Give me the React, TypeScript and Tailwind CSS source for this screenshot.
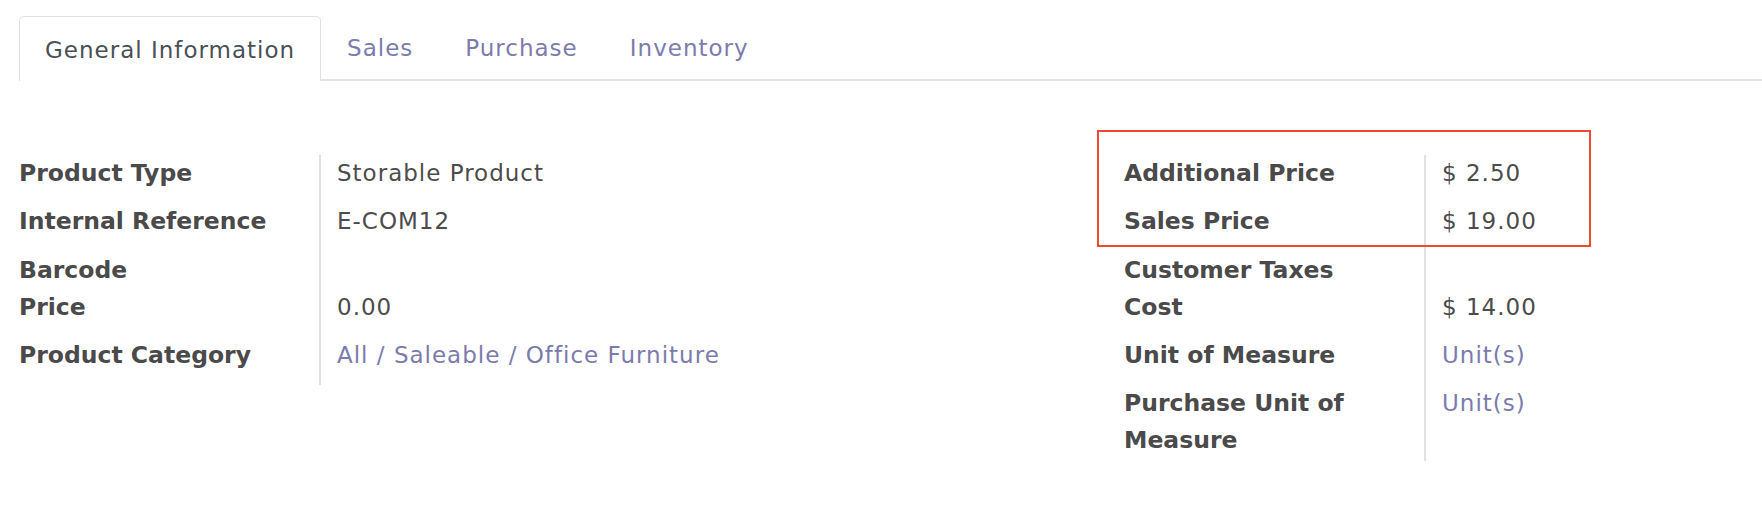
import React from "react";

type Row = { label: string[]; value?: string; link?: boolean; h: string };

const LEFT_ROWS: Row[] = [
  { label: ["Product Type"], value: "Storable Product", h: "h-[48px]" },
  { label: ["Internal Reference"], value: "E-COM12", h: "h-[49px]" },
  { label: ["Barcode"], h: "h-[37px]" },
  { label: ["Price"], value: "0.00", h: "h-[48px]" },
  { label: ["Product Category"], value: "All / Saleable / Office Furniture", link: true, h: "h-[48px]" },
];

const RIGHT_ROWS: Row[] = [
  { label: ["Additional Price"], value: "$ 2.50", h: "h-[48px]" },
  { label: ["Sales Price"], value: "$ 19.00", h: "h-[49px]" },
  { label: ["Customer Taxes"], h: "h-[37px]" },
  { label: ["Cost"], value: "$ 14.00", h: "h-[48px]" },
  { label: ["Unit of Measure"], value: "Unit(s)", link: true, h: "h-[48px]" },
  { label: ["Purchase Unit of", "Measure"], value: "Unit(s)", link: true, h: "h-[76px]" },
];

function Group({ rows }: { rows: Row[] }) {
  return (
    <div className="grid grid-cols-[300px_1fr]">
      {rows.map((r, i) => (
        <React.Fragment key={i}>
          <div className={`${r.h} font-bold text-[23.5px] leading-[37px] text-[#4a4a4a]`}>
            {r.label.map((l, j) => (
              <div key={j}>{l}</div>
            ))}
          </div>
          <div className={`${r.h} border-l-2 border-[#e0e0e0] pl-4 text-[23px] leading-[37px] tracking-[1px]`}>
            {r.value && (
              <span className={r.link ? "text-[#7c7bad]" : "text-[#4c4c4c]"}>{r.value}</span>
            )}
          </div>
        </React.Fragment>
      ))}
    </div>
  );
}

export default function App() {
  const tabs = ["General Information", "Sales", "Purchase", "Inventory"];

  return (
    <div className="w-[1762px] h-[522px] bg-white font-['DejaVu_Sans',sans-serif] text-[#4c4c4c] overflow-hidden">
      {/* tabs */}
      <div className="pt-4 pl-[19px]">
        <div className="flex h-[65px] border-b-2 border-[#e1e5e9]">
          {tabs.map((t, i) =>
            i === 0 ? (
              <div
                key={t}
                className="h-[65px] -mb-[2px] px-[25px] pt-[2px] flex items-center bg-white border border-b-0 border-[#dde1e5] rounded-t-[5px] text-[23px] tracking-[1px] text-[#495057]"
              >
                {t}
              </div>
            ) : (
              <div
                key={t}
                className="h-[63px] px-[25px] pt-[2px] flex items-center border border-transparent text-[23px] tracking-[1px] text-[#7c7bad]"
              >
                {t}
              </div>
            )
          )}
        </div>
      </div>

      {/* form groups */}
      <div className="flex mt-[74px]">
        <div className="w-[1124px] pl-[19px]">
          <Group rows={LEFT_ROWS} />
        </div>
        <div className="w-[520px] relative">
          <Group rows={RIGHT_ROWS} />
          <div className="absolute -left-[27px] -top-[25px] w-[494px] h-[117px] border-2 border-[#ef4a2f] pointer-events-none" />
        </div>
      </div>
    </div>
  );
}
